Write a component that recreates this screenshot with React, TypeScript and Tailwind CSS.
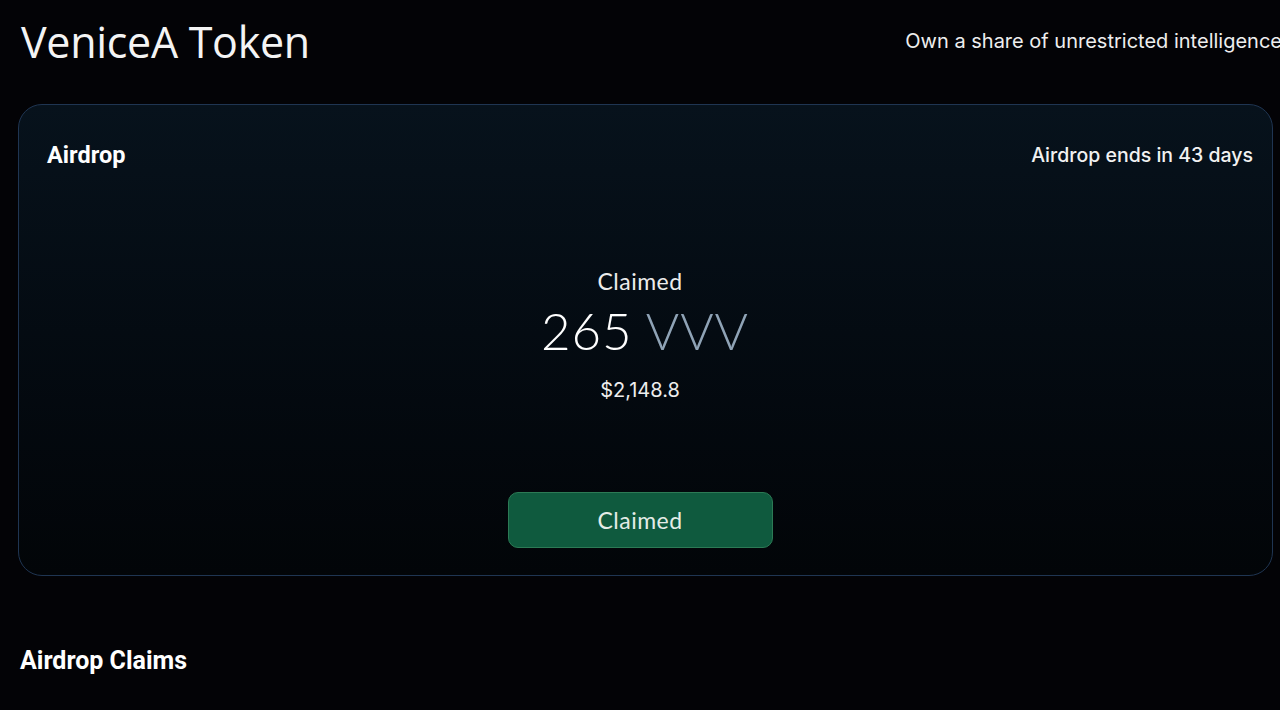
export default function App() {
  return (
    <div className="min-h-[710px] w-[1280px] overflow-hidden bg-[#030306] text-white">
      <header className="flex h-[82px] items-center justify-between pl-[21px]">
        <h1 className="text-[43px] font-normal leading-none tracking-[-0.3px] text-[#f4f4f4] [font-family:'Open_Sans',sans-serif]">
          VeniceA Token
        </h1>
        <p className="mr-[-2px] shrink-0 whitespace-nowrap text-[20px] text-[#eeeeee] [font-family:Inter,sans-serif]">
          Own a share of unrestricted intelligence
        </p>
      </header>

      <section className="ml-[18px] mt-[22px] flex h-[472px] w-[1255px] flex-col rounded-[24px] border border-[#1f3552] bg-gradient-to-b from-[#07121c] to-[#020508] pl-[28px] pr-[18px] pt-[35px]">
        <div className="flex h-[30px] items-center justify-between">
          <h2 className="text-[23.5px] font-bold leading-[30px] text-white [font-family:Roboto,sans-serif]">
            Airdrop
          </h2>
          <span className="mr-[1px] text-[19.5px] font-medium leading-[30px] text-[#f2f2f2] [font-family:Inter,sans-serif]">
            Airdrop ends in 43 days
          </span>
        </div>

        <div className="mr-[21px] mt-[97px] flex flex-col items-center [font-family:Lato,sans-serif]">
          <p className="text-[23px] font-normal leading-[28px] tracking-[0.5px] text-[#ececec]">
            Claimed
          </p>
          <p className="mt-[8px] pl-[10px] text-[51px] font-light leading-[56px] tracking-[1px]">
            <span className="text-white">265</span>{" "}
            <span className="text-[#8fa3b6]">VVV</span>
          </p>
          <p className="mt-[19px] text-[20px] leading-[24px] text-[#eeeeee] [font-family:Inter,sans-serif]">
            $2,148.8
          </p>

          <button className="mt-[90px] flex h-[56px] w-[265px] items-center justify-center rounded-[10px] border border-[#2c7a55] bg-[#0f5a3e] text-[23px] font-normal tracking-[0.5px] text-[#e4ece7]">
            Claimed
          </button>
        </div>
      </section>

      <h2 className="ml-[20px] mt-[70px] text-[25px] font-bold leading-[30px] text-white [font-family:Roboto,sans-serif]">
        Airdrop Claims
      </h2>
    </div>
  );
}
